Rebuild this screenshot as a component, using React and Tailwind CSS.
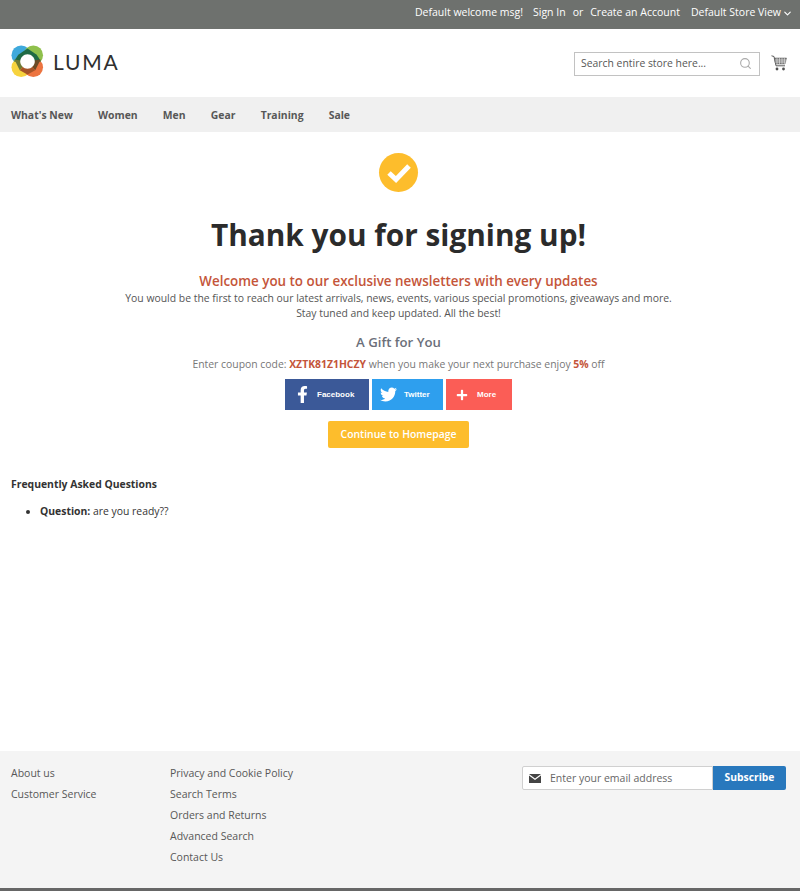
import { ChevronDown, Search } from 'lucide-react';
import { FaFacebookF, FaTwitter, FaPlus } from 'react-icons/fa';

const navItems = ["What's New", 'Women', 'Men', 'Gear', 'Training', 'Sale'];

const LumaMark = () => (
  <svg width="33" height="33" viewBox="0 0 34 34">
    <circle cx="10.500" cy="10.500" r="10" fill="#3fa9dc" />
    <circle cx="23" cy="10.500" r="10" fill="#8fc04c" />
    <circle cx="10.500" cy="23" r="10" fill="#f7d33e" />
    <circle cx="23" cy="23" r="10" fill="#ec7440" />
    <path d="M17 3.500 L26.500 10 L31 17 L17 17 L3 17 L7.500 10 Z" fill="#1f6b45" />
    <path d="M3.500 15 L17 17 L9 26 Z" fill="#6f7a35" />
    <path d="M30.500 15 L17 17 L25 26 Z" fill="#6b4a26" />
    <path d="M9 26 L17 17 L25 26 L17 30.500 Z" fill="#a65428" />
    <path d="M17 9.500 C21 9.500 24.500 13 24.500 17 C24.500 21 21 24.500 17 24.500 C13 24.500 9.500 21 9.500 17 C9.500 13 13 9.500 17 9.500 Z" fill="#fff" />
  </svg>
);

const Cart = () => (
  <svg width="16" height="16" viewBox="0 0 16 16" fill="none" stroke="#5b5b5b" className="mt-[3px]">
    <path d="M0.500 0.800 L3 1.500 L5 10.800 L14 10.800" strokeWidth="1" />
    <path d="M3.300 3 H15.500 L14 9 H4.600 Z" fill="#7d7d7d" strokeWidth="0.500" />
    <path d="M6 3 V9 M8.500 3 V9 M11 3 V9 M13.400 3 V9 M3.900 5 H15 M4.300 7 H14.500" stroke="#fff" strokeWidth="0.500" />
    <circle cx="6" cy="14" r="1.400" fill="#4f4f4f" stroke="none" />
    <circle cx="12.500" cy="14" r="1.400" fill="#4f4f4f" stroke="none" />
  </svg>
);

const Envelope = () => (
  <svg width="12" height="9" viewBox="0 0 12 9" fill="#444">
    <path d="M0 0 H12 L6 4.500 Z" />
    <path d="M0 1.600 L6 6 L12 1.600 V9 H0 Z" />
  </svg>
);

export default function App() {
  return (
    <div className="min-h-[891px] flex flex-col bg-white font-['Open_Sans',sans-serif] text-[#333]">
      {/* Top bar */}
      <div className="h-[29px] bg-[#6e716e] flex items-center justify-end pr-[7px] pb-[3px] text-[10.500px] text-white">
        <span>Default welcome msg!</span>
        <span className="ml-[10px]">Sign In</span>
        <span className="ml-[7px]">or</span>
        <span className="ml-[7px]">Create an Account</span>
        <span className="ml-[11px]">Default Store View</span>
        <ChevronDown size={11} strokeWidth={2.500} className="ml-[1px]" />
      </div>

      {/* Header */}
      <header className="h-[68px] flex items-center justify-between pl-[11px] pr-[13px]">
        <div className="flex items-center gap-[9px] mb-[3px]">
          <LumaMark />
          <span className="font-['Lato',sans-serif] text-[21px] tracking-[1.800px] text-[#2f2f2f]">LUMA</span>
        </div>
        <div className="flex items-start gap-[11px] mt-[2px]">
          <div className="w-[186px] h-[24px] border border-[#c2c2c2] flex items-center justify-between pl-[6px] pr-[7px] text-[10.400px] text-[#575757]">
            <span>Search entire store here...</span>
            <Search size={13} className="text-[#aaa] mb-[2px]" />
          </div>
          <Cart />
        </div>
      </header>

      {/* Nav */}
      <nav className="h-[35px] bg-[#f0f0f0] flex items-center gap-[25.200px] pl-[11px] pt-[2px] text-[10.400px] font-bold text-[#575757]">
        {navItems.map((item) => (
          <span key={item}>{item}</span>
        ))}
      </nav>

      {/* Main */}
      <main className="flex-1 flex flex-col">
        <div className="flex flex-col items-center pt-[21px] pr-[3px]">
          <div className="w-[39px] h-[39px] rounded-full bg-[#fdbd2c] flex items-center justify-center">
            <svg width="26" height="22" viewBox="0 0 26 22" fill="none" stroke="#fff" strokeWidth="5">
              <path d="M3 11 L10 17.500 L23 4" />
            </svg>
          </div>
          <h1 className="mt-[21px] text-[29.800px] leading-[44px] font-bold text-[#2b2b2b]">Thank you for signing up!</h1>
          <p className="mt-[15px] text-[13.400px] leading-[19px] font-semibold text-[#c4553a]">
            Welcome you to our exclusive newsletters with every updates
          </p>
          <p className="text-[10.400px] leading-[15px] text-[#555] text-center">
            You would be the first to reach our latest arrivals, news, events, various special promotions, giveaways and more.
            <br />
            Stay tuned and keep updated. All the best!
          </p>
          <h2 className="mt-[12px] text-[13.200px] leading-[19px] font-semibold text-[#6b6f7a]">A Gift for You</h2>
          <p className="mt-[5px] text-[10.400px] leading-[15px] text-[#777]">
            Enter coupon code: <b className="text-[#c4553a]">XZTK81Z1HCZY</b> when you make your next purchase enjoy{' '}
            <b className="text-[#c4553a]">5%</b> off
          </p>
          <div className="mt-[7px] flex gap-[3px] font-['Liberation_Sans',sans-serif] text-[8px] font-bold text-white">
            <div className="w-[84px] h-[31px] bg-[#3b5998] flex items-center pl-[9px] gap-[6px]">
              <FaFacebookF size={17} />
              <span>Facebook</span>
            </div>
            <div className="w-[71px] h-[31px] bg-[#2e9fee] flex items-center pl-[8px] gap-[7px]">
              <FaTwitter size={17} />
              <span>Twitter</span>
            </div>
            <div className="w-[66px] h-[31px] bg-[#fb5d56] flex items-center pl-[10px] gap-[9px]">
              <FaPlus size={12} />
              <span>More</span>
            </div>
          </div>
          <button className="mt-[11px] w-[141px] h-[27px] pt-[1px] rounded-[2px] bg-[#fdbd2c] text-[10.400px] font-semibold text-white">
            Continue to Homepage
          </button>
        </div>

        <div className="mt-[29px] pl-[11px] text-[10.400px] text-[#333]">
          <div className="leading-[14px] font-bold">Frequently Asked Questions</div>
          <ul className="mt-[13px] pl-[29px] list-disc leading-[14px]">
            <li><b>Question:</b> are you ready??</li>
          </ul>
        </div>
      </main>

      {/* Footer */}
      <footer className="h-[137px] bg-[#f4f4f4] flex pl-[11px] pr-[14px] pt-[15px] text-[10.500px] text-[#575757]">
        <div className="w-[159px] flex flex-col gap-[6px] leading-[15px]">
          <span>About us</span>
          <span>Customer Service</span>
        </div>
        <div className="flex flex-col gap-[6px] leading-[15px]">
          <span>Privacy and Cookie Policy</span>
          <span>Search Terms</span>
          <span>Orders and Returns</span>
          <span>Advanced Search</span>
          <span>Contact Us</span>
        </div>
        <div className="ml-auto flex h-[24px]">
          <div className="w-[191px] bg-white border border-[#d0d0d0] rounded-l-[2px] flex items-center pl-[6px] pt-[1px] gap-[9px] text-[#666]">
            <Envelope />
            <span>Enter your email address</span>
          </div>
          <button className="w-[73px] bg-[#2878bd] rounded-r-[2px] text-[10.300px] font-bold text-white">Subscribe</button>
        </div>
      </footer>
      <div className="h-[3px] bg-[#666]" />
    </div>
  );
}
